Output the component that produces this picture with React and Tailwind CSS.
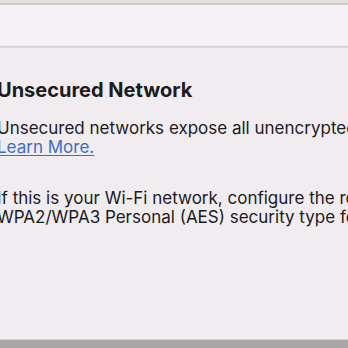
import React from "react";

export default function App() {
  return (
    <div
      className="w-[348px] h-[348px] overflow-hidden flex flex-col bg-[#f1ecf0]"
      style={{ fontFamily: "Inter, 'Noto Sans', sans-serif" }}
    >
      {/* window chrome */}
      <div className="h-[3px] bg-[#e3e1dd] shrink-0" />
      <div className="h-[2px] bg-[#cdcbcc] shrink-0" />
      <div className="h-[41px] bg-[#f5f1f6] shrink-0 border-b border-[#ece8ed]" />
      <div className="h-[2px] bg-[#d8d4d8] shrink-0" />

      {/* content */}
      <div className="flex-1 ml-[-3px] pt-[30px] text-[#1c1b1d] whitespace-nowrap">
        <h1 className="text-[20px] font-bold leading-[24px]">
          Unsecured Network
        </h1>
        <p className="mt-[17px] text-[17px] leading-[19px]">
          Unsecured networks expose all unencrypted network traffic.
          <br />
          <a className="text-[#3b6fc0] underline underline-offset-2">Learn More.</a>
        </p>
        <p className="mt-[32px] text-[17px] leading-[19px]">
          If this is your Wi-Fi network, configure the router to use
          <br />
          WPA2/WPA3 Personal (AES) security type for this network.
        </p>
      </div>

      {/* bottom */}
      <div className="h-[9px] shrink-0 bg-[#a8a6a7] border-t border-[#d4d1d3]" />
    </div>
  );
}
